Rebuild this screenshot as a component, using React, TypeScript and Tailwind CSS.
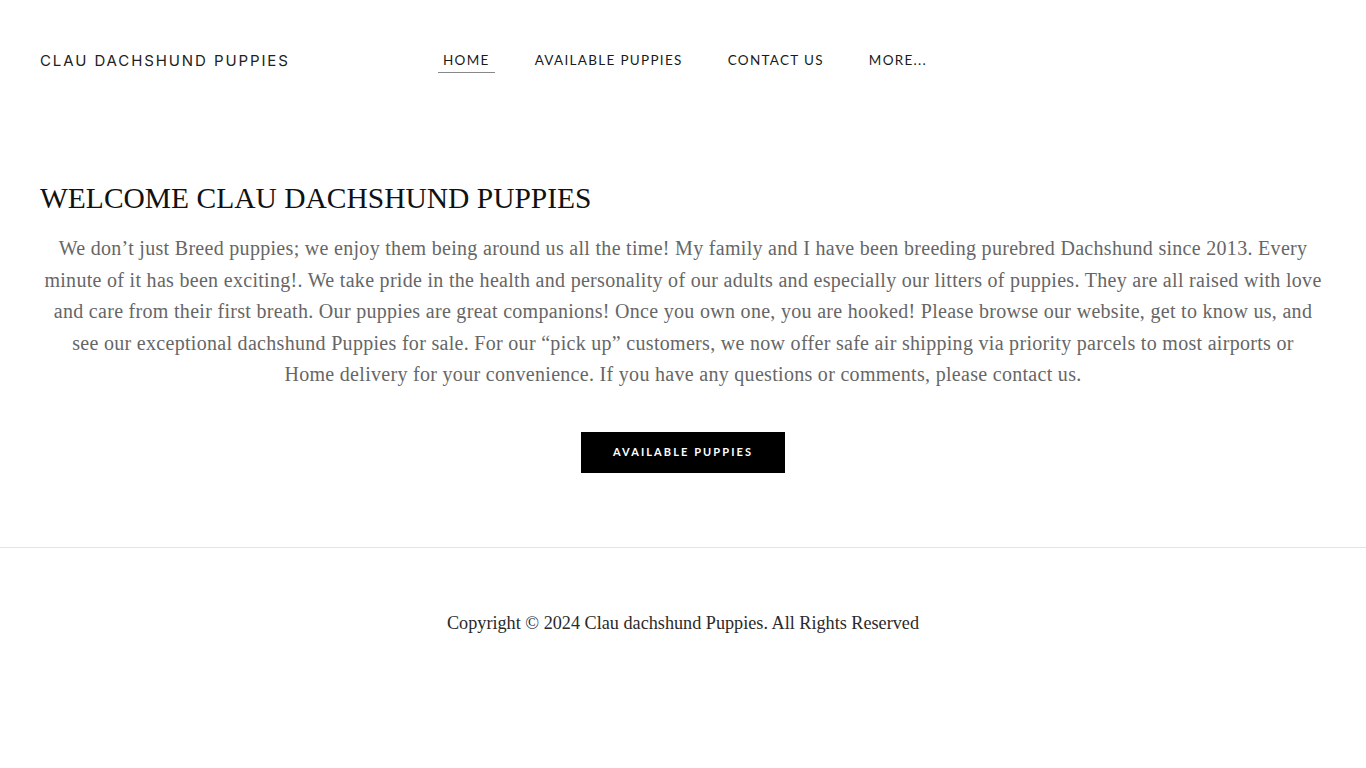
export default function App() {
  const nav = ["HOME", "AVAILABLE PUPPIES", "CONTACT US", "MORE..."];
  const serif = { fontFamily: '"Liberation Serif", "DejaVu Serif", serif' };

  return (
    <div className="min-h-screen bg-white" >
      <header className="flex items-start px-10 pt-[50px] h-[140px]">
        <div className="w-[398px] shrink-0 pt-[1px] text-[15px] leading-5 tracking-[1.9px] text-[#222]" style={{ fontFamily: '"Inter", "Open Sans", sans-serif' }}>
          CLAU DACHSHUND PUPPIES
        </div>
        <nav className="flex gap-[35px]" style={{ fontFamily: 'Lato, "Open Sans", sans-serif' }}>
          {nav.map((item, i) => (
            <a
              key={item}
              href="#"
              className={`px-[5px] pb-[2px] text-[13.5px] leading-5 tracking-[1.3px] text-[#1a1a1a] border-b ${i === 0 ? "border-[#888]" : "border-transparent"}`}
            >
              {item}
            </a>
          ))}
        </nav>
      </header>

      <main className="px-10 pt-[40px] pb-[74px]">
        <h1 className="text-[29.5px] leading-9 text-[#111] mb-[17px]" style={serif}>
          WELCOME CLAU DACHSHUND PUPPIES
        </h1>
        <p className="text-center text-[20px] leading-[31.5px] tracking-[0.3px] text-[#666]" style={serif}>
          We don’t just Breed puppies; we enjoy them being around us all the time! My family and I have been breeding purebred Dachshund since 2013. Every<br />
          minute of it has been exciting!. We take pride in the health and personality of our adults and especially our litters of puppies. They are all raised with love<br />
          and care from their first breath. Our puppies are great companions! Once you own one, you are hooked! Please browse our website, get to know us, and<br />
          see our exceptional dachshund Puppies for sale. For our “pick up” customers, we now offer safe air shipping via priority parcels to most airports or<br />
          Home delivery for your convenience. If you have any questions or comments, please contact us.
        </p>
        <div className="flex justify-center mt-[41px]">
          <a href="#" className="flex items-center justify-center w-[204px] h-[41px] bg-black text-white text-[11px] font-bold tracking-[2.1px]" style={{ fontFamily: 'Lato, "Open Sans", sans-serif' }}>
            AVAILABLE PUPPIES
          </a>
        </div>
      </main>

      <footer className="border-t border-[#e3e3e3] pt-[63px] pb-[140px] text-center">
        <p className="text-[18.2px] leading-6 text-[#2a2a2a]" style={serif}>
          Copyright © 2024 Clau dachshund Puppies. All Rights Reserved
        </p>
      </footer>
    </div>
  );
}
